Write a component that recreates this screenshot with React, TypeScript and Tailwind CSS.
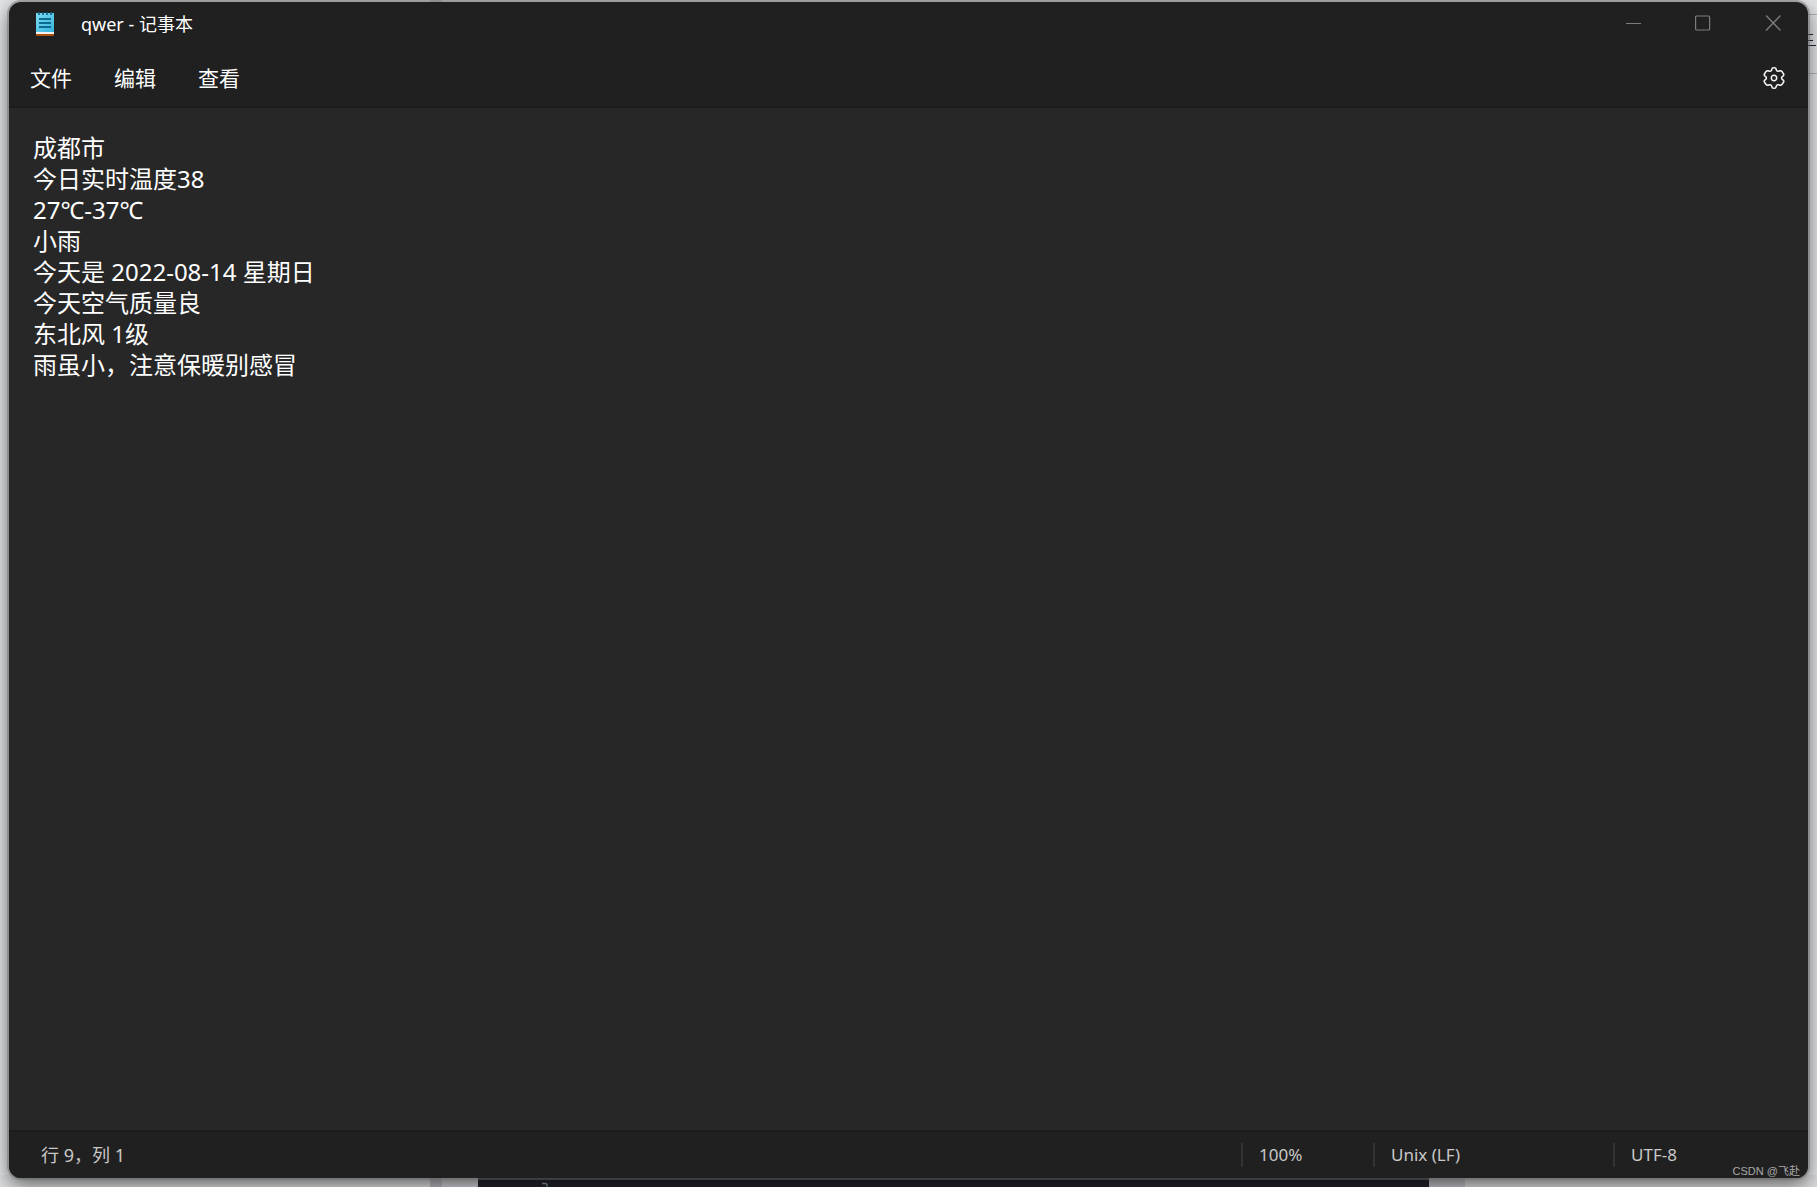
import { useState } from "react";

const initialText = `成都市
今日实时温度38
27℃-37℃
小雨
今天是 2022-08-14 星期日
今天空气质量良
东北风 1级
雨虽小，注意保暖别感冒
`;

const menus = ["文件", "编辑", "查看"];

function NotepadIcon() {
  return (
    <svg width="18" height="24" viewBox="0 0 18 24" aria-hidden="true">
      <defs>
        <linearGradient id="paper" x1="0" y1="0" x2="1" y2="1">
          <stop offset="0" stopColor="#7fdcf3" />
          <stop offset="1" stopColor="#35b3dc" />
        </linearGradient>
      </defs>
      <rect y="20" width="18" height="4" rx="1" fill="#a8500f" />
      <rect y="19" width="18" height="3" fill="#f3f1ee" />
      <rect y="1" width="18" height="19" fill="url(#paper)" />
      <path d="M3 0v3M7 0v3M11 0v3M15 0v3" stroke="#0b5f80" strokeWidth="1.6" />
      <path d="M3 7h12M3 11h12M3 15h12" stroke="#0b6b91" strokeWidth="1.8" />
    </svg>
  );
}

function GearIcon() {
  return (
    <svg
      width="24"
      height="24"
      viewBox="-12 -12 24 24"
      fill="none"
      stroke="#f4f4f4"
      strokeWidth="1.5"
      strokeLinejoin="round"
      aria-hidden="true"
    >
      <path d="M-2.2-8.2L-1.9-9.6Q-1.7-10.3 0-10.3Q1.7-10.3 1.9-9.6L2.2-8.2Q2.7-6.6 4.4-6.8L6-7.3Q7.1-7.6 8.1-6.3L9.6-4Q10.2-3 9.2-2.1L8-1.2Q7.2 0 8 1.2L9.2 2.1Q10.2 3 9.6 4L8.1 6.3Q7.1 7.6 6 7.3L4.4 6.8Q2.7 6.6 2.2 8.2L1.9 9.6Q1.7 10.3 0 10.3Q-1.7 10.3-1.9 9.6L-2.2 8.2Q-2.7 6.6-4.4 6.8L-6 7.3Q-7.1 7.6-8.1 6.3L-9.6 4Q-10.2 3-9.2 2.1L-8 1.2Q-7.2 0-8-1.2L-9.2-2.1Q-10.2-3-9.6-4L-8.1-6.3Q-7.1-7.6-6-7.3L-4.4-6.8Q-2.7-6.6-2.2-8.2Z" />
      <circle r="2.7" />
    </svg>
  );
}

function TitleBar() {
  return (
    <header className="flex h-11 items-center">
      <div className="flex flex-1 items-center gap-[27px] pl-[27px]">
        <NotepadIcon />
        <h1 className="text-lg leading-6 text-white">qwer - 记事本</h1>
      </div>
      <div className="flex h-[41px] self-start text-[#7d7d7d]">
        <button type="button" aria-label="最小化" className="grid w-[70px] place-items-center">
          <svg width="16" height="16" viewBox="0 0 16 16" stroke="currentColor">
            <path d="M1 8.5h15" />
          </svg>
        </button>
        <button type="button" aria-label="最大化" className="grid w-[70px] place-items-center">
          <svg width="16" height="16" viewBox="0 0 16 16" fill="none" stroke="currentColor">
            <rect x=".6" y="1" width="14" height="14" rx="1" strokeWidth="1.2" />
          </svg>
        </button>
        <button type="button" aria-label="关闭" className="grid w-[70px] place-items-center">
          <svg width="16" height="16" viewBox="0 0 16 16" stroke="currentColor" strokeWidth="1.3">
            <path d="M1 .5l14.500 15M15.500.5L1 15.500" />
          </svg>
        </button>
      </div>
    </header>
  );
}

function MenuBar() {
  return (
    <nav className="flex h-[62px] items-center justify-between border-b-2 border-[#1c1c1c] pt-1 pr-[22px] pl-[21px]">
      <div className="flex gap-[42px]">
        {menus.map((label) => (
          <button key={label} type="button" className="text-[21px] leading-8 text-white">
            {label}
          </button>
        ))}
      </div>
      <button type="button" aria-label="设置">
        <GearIcon />
      </button>
    </nav>
  );
}

function StatusBar() {
  return (
    <footer className="flex h-12 items-center border-t-2 border-[#1c1c1c] bg-[#202020] text-[17px] leading-6 text-[#c8c8c8]">
      <span className="flex-1 pl-8 text-lg leading-6">行 9，列 1</span>
      <span className="w-[132px] border-l-2 border-[#333333] pl-4">100%</span>
      <span className="w-60 border-l-2 border-[#333333] pl-4">Unix (LF)</span>
      <span className="w-[195px] border-l-2 border-[#333333] pl-4">UTF-8</span>
    </footer>
  );
}

// Slivers of the windows that stay visible behind the editor
function Backdrop() {
  return (
    <div className="absolute inset-0 flex flex-col justify-between overflow-hidden bg-[#e4e6e9]">
      <div className="flex h-[3px]">
        <div className="w-[430px] bg-[#e4e5e7]" />
        <div className="w-3 bg-[#c4c5c8]" />
        <div className="flex-1 bg-[#e4e5e7]" />
      </div>
      <svg className="absolute top-0 right-0" width="12" height="80" viewBox="0 0 12 80">
        <path d="M0 14.5h12M0 73.5h12" stroke="#b4b5b8" />
        <path d="M3 34.5h5M3 40.5h5M3 45.5h8" stroke="#1c2733" strokeWidth="1.2" />
      </svg>
      <div className="flex h-3">
        <div className="w-[430px] bg-[#dcdee0]" />
        <div className="w-3 bg-[#b9bac0]" />
        <div className="w-9 bg-[#d0d1d5]" />
        <div className="flex-1 bg-[#22242d]">
          <svg className="ml-[60px]" width="16" height="12" viewBox="0 0 16 12" fill="none">
            <path d="M4 8.500h4q1 0 1 2v1" stroke="#8792a2" strokeWidth="1.5" />
          </svg>
        </div>
        <div className="w-9 bg-[#c2c3c7]" />
        <div className="w-[352px] bg-[#dcdcde]" />
      </div>
    </div>
  );
}

export default function App() {
  const [text, setText] = useState(initialText);

  return (
    <div className="relative flex min-h-screen flex-col px-[9px] pt-[2px] pb-[9px] font-['Noto_Sans','Noto_Sans_CJK_SC',sans-serif]">
      <Backdrop />
      <main className="relative flex flex-1 flex-col rounded-xl bg-[#202020] shadow-[0_0_0_2px_rgba(110,110,110,0.45),0_6px_20px_rgba(0,0,0,0.6)]">
        <div className="flex flex-1 flex-col overflow-hidden rounded-xl">
          <TitleBar />
          <MenuBar />
          <textarea
            aria-label="文本编辑器"
            spellCheck={false}
            value={text}
            onChange={(e) => setText(e.target.value)}
            className="w-full flex-1 resize-none bg-[#272727] px-6 pt-6 text-2xl leading-[31px] text-white outline-none"
          />
          <StatusBar />
        </div>
        <span className="absolute right-2 -bottom-px font-['Liberation_Sans','Noto_Sans_CJK_SC',sans-serif] text-[11px] leading-4 text-[#a8a8a8]">
          CSDN @飞赴
        </span>
      </main>
    </div>
  );
}
